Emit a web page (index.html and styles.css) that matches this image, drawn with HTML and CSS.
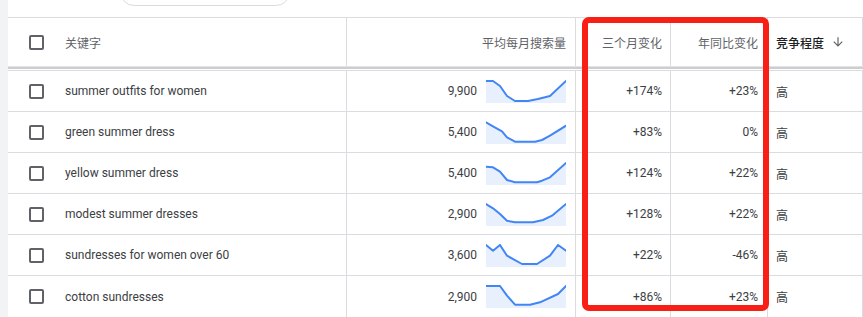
FILE: index.html
```html
<!DOCTYPE html>
<html lang="zh">
<head>
<meta charset="utf-8">
<link rel="stylesheet" href="styles.css">
</head>
<body>
<div class="page">
  <div class="strip"></div>
  <div class="main">
    <div class="topbar"><div class="search"></div></div>
    <div class="table">
      <div class="row head">
        <div class="cell kw"><span class="cb"></span><span class="htext">关键字</span></div>
        <div class="cell num"><span class="htext">平均每月搜索量</span></div>
        <div class="cell pct"><span class="htext">三个月变化</span></div>
        <div class="cell pct"><span class="htext">年同比变化</span></div>
        <div class="cell comp"><span class="hsort">竞争程度</span>
          <svg class="arrow" viewBox="0 0 24 24" width="14" height="14"><path d="M20 12l-1.41-1.41L13 16.17V4h-2v12.17l-5.58-5.59L4 12l8 8 8-8z" fill="#5f6368"/></svg>
        </div>
      </div>
      <div class="divider"></div>

      <div class="row">
        <div class="cell kw"><span class="cb"></span><span>summer outfits for women</span></div>
        <div class="cell num"><span>9,900</span>
          <svg class="spark" viewBox="0 0 80 23" width="80" height="23"><polygon class="area" points="0,1 7,1 14,6 21,16 29,21 42,21 52,19 64,16 80,1 80,23 0,23"/><polyline class="line" points="0,1 7,1 14,6 21,16 29,21 42,21 52,19 64,16 80,1"/></svg>
        </div>
        <div class="cell pct">+174%</div>
        <div class="cell pct">+23%</div>
        <div class="cell comp">高</div>
      </div>

      <div class="row">
        <div class="cell kw"><span class="cb"></span><span>green summer dress</span></div>
        <div class="cell num"><span>5,400</span>
          <svg class="spark" viewBox="0 0 80 23" width="80" height="23"><polygon class="area" points="0,1.3 7,5.3 16,10.3 21,16.3 29,20.7 49,20.7 56,19 64,14.7 80,4.7 80,23 0,23"/><polyline class="line" points="0,1.3 7,5.3 16,10.3 21,16.3 29,20.7 49,20.7 56,19 64,14.7 80,4.7"/></svg>
        </div>
        <div class="cell pct">+83%</div>
        <div class="cell pct">0%</div>
        <div class="cell comp">高</div>
      </div>

      <div class="row">
        <div class="cell kw"><span class="cb"></span><span>yellow summer dress</span></div>
        <div class="cell num"><span>5,400</span>
          <svg class="spark" viewBox="0 0 80 23" width="80" height="23"><polygon class="area" points="0,4.7 7,5.3 14,9.7 21,18 29,20.3 51,20.3 56,18.7 64,15.3 80,1 80,23 0,23"/><polyline class="line" points="0,4.7 7,5.3 14,9.7 21,18 29,20.3 51,20.3 56,18.7 64,15.3 80,1"/></svg>
        </div>
        <div class="cell pct">+124%</div>
        <div class="cell pct">+22%</div>
        <div class="cell comp">高</div>
      </div>

      <div class="row">
        <div class="cell kw"><span class="cb"></span><span>modest summer dresses</span></div>
        <div class="cell num"><span>2,900</span>
          <svg class="spark" viewBox="0 0 80 23" width="80" height="23"><polygon class="area" points="0,1 7,5.3 14,11 21,17.7 29,19.3 47,19.3 57,17 66,12.7 80,1 80,23 0,23"/><polyline class="line" points="0,1 7,5.3 14,11 21,17.7 29,19.3 47,19.3 57,17 66,12.7 80,1"/></svg>
        </div>
        <div class="cell pct">+128%</div>
        <div class="cell pct">+22%</div>
        <div class="cell comp">高</div>
      </div>

      <div class="row">
        <div class="cell kw"><span class="cb"></span><span>sundresses for women over 60</span></div>
        <div class="cell num"><span>3,600</span>
          <svg class="spark" viewBox="0 0 80 23" width="80" height="23"><polygon class="area" points="0,1 7,6.7 14,1 21,11.7 36,20 51,20 64,11.7 72,1 80,6.7 80,23 0,23"/><polyline class="line" points="0,1 7,6.7 14,1 21,11.7 36,20 51,20 64,11.7 72,1 80,6.7"/></svg>
        </div>
        <div class="cell pct">+22%</div>
        <div class="cell pct">-46%</div>
        <div class="cell comp">高</div>
      </div>

      <div class="row last">
        <div class="cell kw"><span class="cb"></span><span>cotton sundresses</span></div>
        <div class="cell num"><span>2,900</span>
          <svg class="spark" viewBox="0 0 80 23" width="80" height="23"><polygon class="area" points="0,1 14,1 21,10.7 29,19.7 44,19.7 54,17.3 72,9 80,1 80,23 0,23"/><polyline class="line" points="0,1 14,1 21,10.7 29,19.7 44,19.7 54,17.3 72,9 80,1"/></svg>
        </div>
        <div class="cell pct">+86%</div>
        <div class="cell pct">+23%</div>
        <div class="cell comp">高</div>
      </div>

      <div class="highlight"></div>
    </div>
  </div>
</div>
</body>
</html>
```

FILE: styles.css
```css
* { box-sizing: border-box; }
html, body { margin: 0; padding: 0; background: #fff; }
body {
  font-family: Roboto, "Noto Sans CJK SC", "Liberation Sans", sans-serif;
  font-size: 12px;
  color: #3c4043;
  width: 863px;
  height: 317px;
  overflow: hidden;
}
.page { display: flex; height: 317px; }
.strip { width: 8px; flex: none; background: #f1f3f4; }
.main { flex: 1; display: flex; flex-direction: column; }
.topbar {
  height: 18px;
  display: flex;
  align-items: flex-start;
  overflow: hidden;
}
.search {
  margin-left: 112px;
  margin-top: -30px;
  width: 170px;
  height: 36px;
  border: 1px solid #dadce0;
  border-radius: 14px;
}
.table {
  position: relative;
  border-top: 1px solid #dadce0;
}
.row {
  display: grid;
  grid-template-columns: 338px 229px 95px 97px 96px;
  height: 41px;
  border-bottom: 1px solid #dadce0;
}
.row.last { border-bottom: none; }
.row.head { height: 49px; border-bottom: 1px solid #e3e3e5; }
.divider {
  height: 4px;
  border-top: 2px solid #cbcdd0;
  border-bottom: 1px solid #dadce0;
}
.cell {
  display: flex;
  align-items: center;
  border-left: 1px solid #dadce0;
  white-space: nowrap;
}
.cell.kw { border-left: none; padding-left: 21px; gap: 21px; }
.cell.num { justify-content: flex-end; padding-right: 9px; gap: 9px; }
.cell.pct { justify-content: flex-end; padding-right: 8px; }
.cell.pct + .cell.pct { padding-right: 9px; }
.cell.comp { padding-left: 8px; border-right: 1px solid #dadce0; }
.cb {
  width: 15px;
  height: 15px;
  border: 2px solid #5f6368;
  border-radius: 2px;
  flex: none;
}
.htext { color: #5f6368; }
.hsort { color: #202124; font-weight: 500; }
.arrow { margin-left: 7px; }
.spark { display: block; flex: none; }
.spark .area { fill: #e8f0fe; stroke: none; }
.spark .line { fill: none; stroke: #4285f4; stroke-width: 2; stroke-linejoin: round; stroke-linecap: round; }
.highlight {
  position: absolute;
  left: 574px;
  top: -1px;
  width: 187px;
  height: 294px;
  border: 6px solid #f71f16;
  border-radius: 7px;
  pointer-events: none;
}
```
